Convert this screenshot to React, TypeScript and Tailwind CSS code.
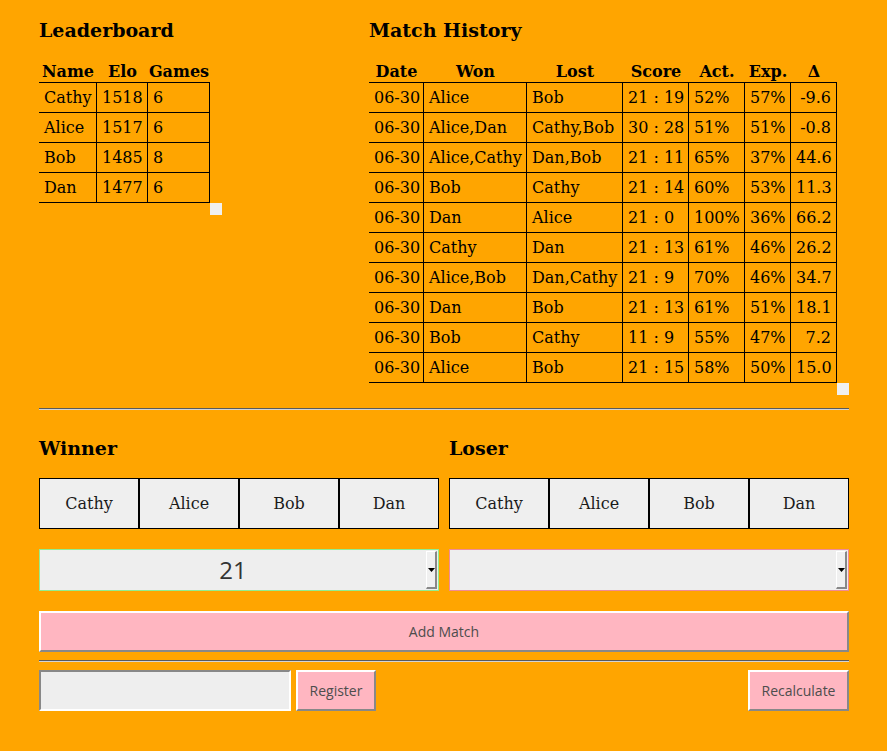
import React from 'react';

const leaderboard = [
  { name: 'Cathy', elo: 1518, games: 6 },
  { name: 'Alice', elo: 1517, games: 6 },
  { name: 'Bob', elo: 1485, games: 8 },
  { name: 'Dan', elo: 1477, games: 6 },
];

const matches = [
  ['06-30', 'Alice', 'Bob', '21 : 19', '52%', '57%', '-9.6'],
  ['06-30', 'Alice,Dan', 'Cathy,Bob', '30 : 28', '51%', '51%', '-0.8'],
  ['06-30', 'Alice,Cathy', 'Dan,Bob', '21 : 11', '65%', '37%', '44.6'],
  ['06-30', 'Bob', 'Cathy', '21 : 14', '60%', '53%', '11.3'],
  ['06-30', 'Dan', 'Alice', '21 : 0', '100%', '36%', '66.2'],
  ['06-30', 'Cathy', 'Dan', '21 : 13', '61%', '46%', '26.2'],
  ['06-30', 'Alice,Bob', 'Dan,Cathy', '21 : 9', '70%', '46%', '34.7'],
  ['06-30', 'Dan', 'Bob', '21 : 13', '61%', '51%', '18.1'],
  ['06-30', 'Bob', 'Cathy', '11 : 9', '55%', '47%', '7.2'],
  ['06-30', 'Alice', 'Bob', '21 : 15', '58%', '50%', '15.0'],
];

const players = ['Cathy', 'Alice', 'Bob', 'Dan'];

// grip square shown at the bottom-right corner of each table
const Grip = () => <div className="w-[12px] h-[12px] bg-[#f0f0f0]" />;

const Separator = () => (
  <div className="h-[2px] border-t border-t-[#5a5a5a] border-b border-b-[#d4d4d4]" />
);

const Heading: React.FC<{ children: React.ReactNode }> = ({ children }) => (
  <h2 className="text-[19px] leading-[24px] font-bold text-black">{children}</h2>
);

const headCell = 'h-[21px] leading-[20px] border-b border-black text-center font-bold';
const bodyCell = 'h-[30px] leading-[29px] border-r border-b border-black px-[5px] whitespace-nowrap';

const SelectBox: React.FC<{ value: string; ring: string }> = ({ value, ring }) => (
  <div className={`h-[42px] flex items-stretch bg-[#eeeeee] border ${ring}`}>
    <div className="flex-1 flex items-center justify-center text-[24px] text-[#333]" style={{ fontFamily: '"Open Sans", sans-serif' }}>
      {value}
    </div>
    <div className="w-[11px] my-[1px] mr-[1px] flex items-center justify-center bg-[#f0f0f0] border-l border-t border-white border-r-2 border-b-2 border-r-[#888] border-b-[#888]">
      <svg width="7" height="4" viewBox="0 0 7 4">
        <path d="M0 0 H7 L3.5 4 Z" fill="#000" />
      </svg>
    </div>
  </div>
);

const raised = 'bg-[#ffb6c1] border-2 border-t-white border-l-white border-r-[#888] border-b-[#888] text-[14px] text-[#4d4d4d]';

export default function App() {
  return (
    <div
      className="min-h-screen bg-[#ffa500] pt-[18px] pl-[39px] text-black"
      style={{ fontFamily: '"DejaVu Serif", serif' }}
    >
      <div className="w-[810px]">
        {/* Tables */}
        <div className="flex">
          <div className="w-[330px]">
            <Heading>Leaderboard</Heading>
            <div className="mt-[20px] grid grid-cols-[171px_12px] grid-rows-[auto_12px]">
              <div className="grid grid-cols-[58px_51px_62px] text-[16px]">
                <div className={headCell}>Name</div>
                <div className={headCell}>Elo</div>
                <div className={headCell}>Games</div>
                {leaderboard.map((p) => (
                  <React.Fragment key={p.name}>
                    <div className={bodyCell}>{p.name}</div>
                    <div className={bodyCell}>{p.elo}</div>
                    <div className={bodyCell}>{p.games}</div>
                  </React.Fragment>
                ))}
              </div>
              <div />
              <div />
              <Grip />
            </div>
          </div>

          <div>
            <Heading>Match History</Heading>
            <div className="mt-[20px] grid grid-cols-[468px_12px] grid-rows-[auto_12px]">
              <div className="grid grid-cols-[55px_103px_96px_66px_56px_46px_46px] text-[16px]">
                {['Date', 'Won', 'Lost', 'Score', 'Act.', 'Exp.', 'Δ'].map((h) => (
                  <div key={h} className={headCell}>{h}</div>
                ))}
                {matches.map((m, i) => (
                  <React.Fragment key={i}>
                    {m.map((c, j) => (
                      <div key={j} className={`${bodyCell} ${j === 6 ? 'text-right' : ''}`}>{c}</div>
                    ))}
                  </React.Fragment>
                ))}
              </div>
              <div />
              <div />
              <Grip />
            </div>
          </div>
        </div>

        <div className="mt-[13px]">
          <Separator />
        </div>

        {/* Winner / Loser pickers */}
        <div className="mt-[26px] grid grid-cols-2 gap-x-[10px]">
          <div>
            <Heading>Winner</Heading>
            <div className="mt-[18px] flex">
              {players.map((p) => (
                <button key={p} className="w-[100px] h-[51px] bg-[#efefef] border border-black text-[16px] text-[#1a1a1a]">
                  {p}
                </button>
              ))}
            </div>
          </div>
          <div>
            <Heading>Loser</Heading>
            <div className="mt-[18px] flex">
              {players.map((p) => (
                <button key={p} className="w-[100px] h-[51px] bg-[#efefef] border border-black text-[16px] text-[#1a1a1a]">
                  {p}
                </button>
              ))}
            </div>
          </div>
          <div className="mt-[20px]">
            <SelectBox value="21" ring="border-[#90ee90]" />
          </div>
          <div className="mt-[20px]">
            <SelectBox value="" ring="border-[#f08a96]" />
          </div>
        </div>

        <div style={{ fontFamily: '"Open Sans", sans-serif' }}>
          <button className={`mt-[20px] w-full h-[41px] ${raised}`}>Add Match</button>

          <div className="mt-[8px]">
            <Separator />
          </div>

          <div className="mt-[8px] flex items-center">
            <input
              className="w-[252px] h-[41px] bg-[#eeeeee] border-2 border-t-[#888] border-l-[#888] border-r-white border-b-white outline-none px-1"
            />
            <button className={`ml-[5px] w-[80px] h-[41px] ${raised}`}>Register</button>
            <div className="flex-1" />
            <button className={`w-[101px] h-[41px] ${raised}`}>Recalculate</button>
          </div>
        </div>
      </div>
    </div>
  );
}
